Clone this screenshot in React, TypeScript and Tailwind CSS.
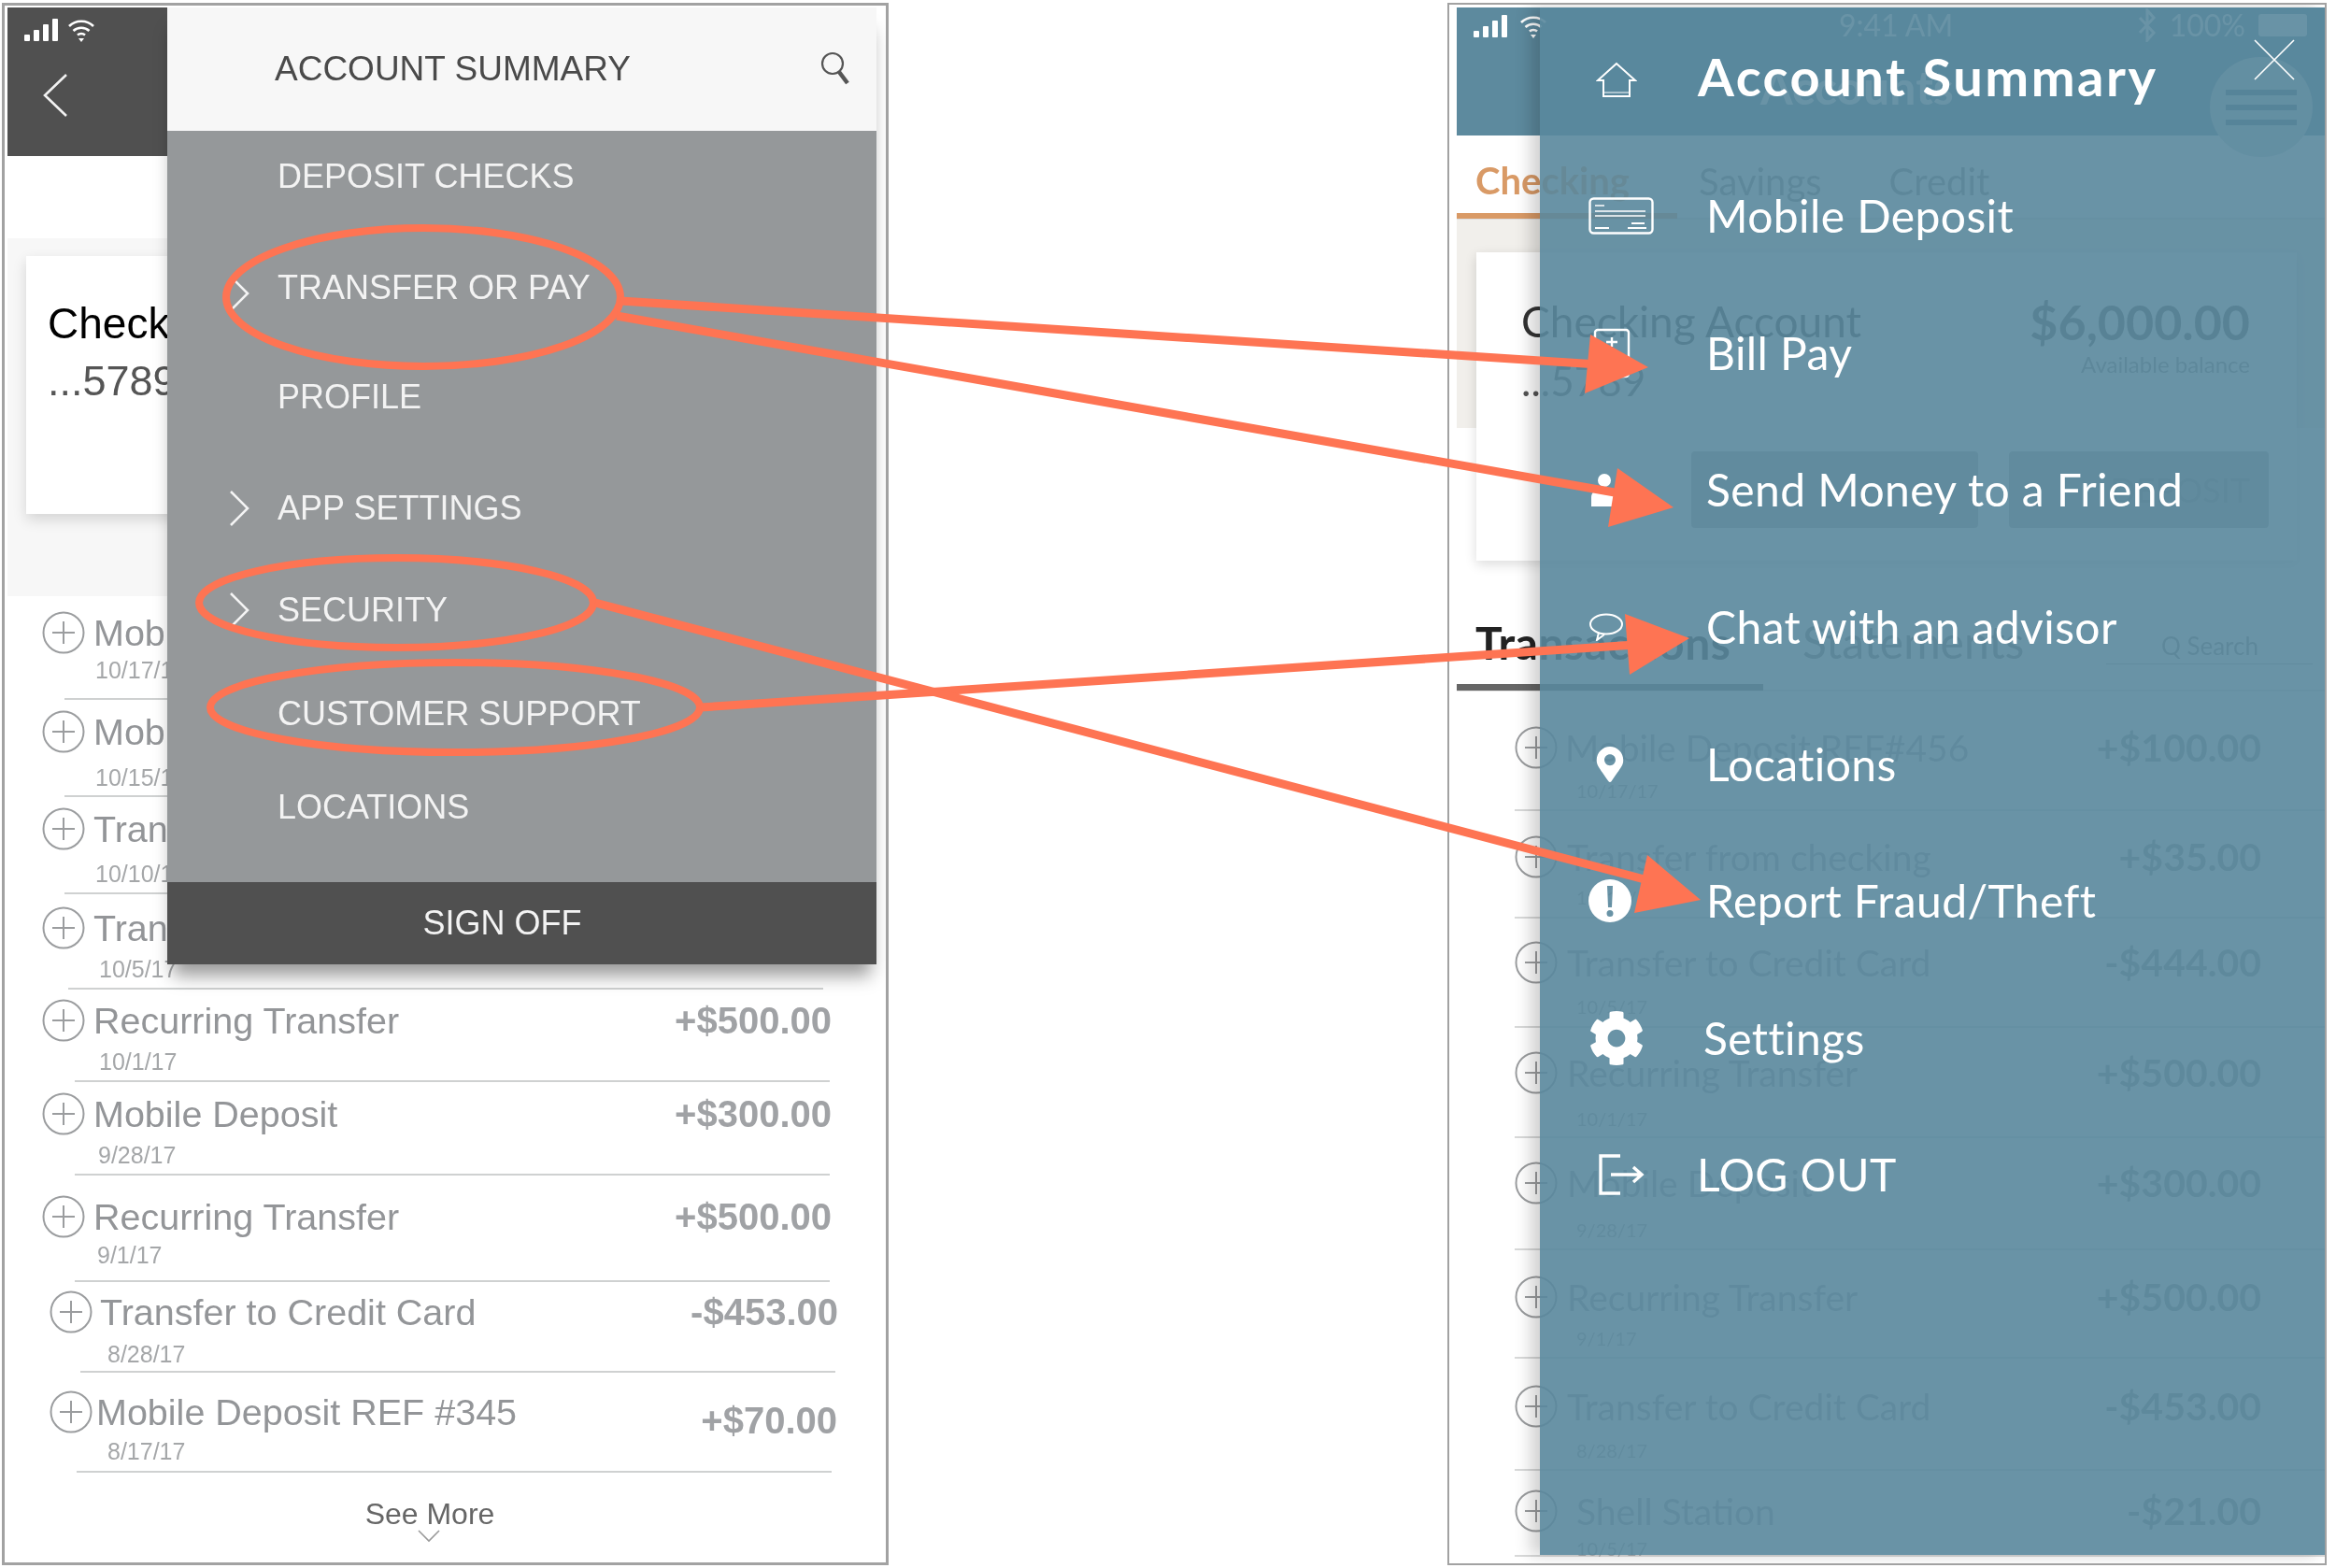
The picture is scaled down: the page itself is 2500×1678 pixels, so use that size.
import { FaCog, FaMapMarkerAlt } from "react-icons/fa";

type Row = {
  title: string;
  date: string;
  amount: string;
  box: string;
  titleCls: string;
  dateCls: string;
  amountCls?: string;
  line: string;
};

const leftRows: Row[] = [
  { title: "Mobile Deposit", date: "10/17/17", amount: "", box: "h-[109px] pt-[15px] pl-[37px] w-[881px]", titleCls: "ml-[9px]", dateCls: "mt-[1px] ml-[57px]", line: "ml-[61px] w-[820px]" },
  { title: "Mobile Deposit", date: "10/15/17", amount: "", box: "h-[102px] pt-[10px] pl-[37px] w-[881px]", titleCls: "ml-[9px]", dateCls: "mt-[10px] ml-[57px]", line: "ml-[61px] w-[820px]" },
  { title: "Transfer", date: "10/10/17", amount: "", box: "h-[102px] pt-[10px] pl-[37px] w-[881px]", titleCls: "ml-[9px]", dateCls: "mt-[9px] ml-[57px]", line: "ml-[61px] w-[820px]" },
  { title: "Transfer", date: "10/5/17", amount: "", box: "h-[100px] pt-[12px] pl-[37px] w-[881px]", titleCls: "ml-[9px]", dateCls: "mt-[5px] ml-[61px]", line: "ml-[65px] w-[808px]" },
  { title: "Recurring Transfer", date: "10/1/17", amount: "+$500.00", box: "h-[97px] pt-[9px] pl-[37px] w-[882px]", titleCls: "ml-[9px]", dateCls: "mt-[5px] ml-[61px]", line: "ml-[72px] w-[808px]" },
  { title: "Mobile Deposit", date: "9/28/17", amount: "+$300.00", box: "h-[98px] pt-[10px] pl-[37px] w-[882px]", titleCls: "ml-[9px]", dateCls: "mt-[5px] ml-[60px]", line: "ml-[72px] w-[808px]" },
  { title: "Recurring Transfer", date: "9/1/17", amount: "+$500.00", box: "h-[112px] pt-[20px] pl-[37px] w-[882px]", titleCls: "ml-[9px]", dateCls: "mt-[2px] ml-[59px]", line: "ml-[72px] w-[808px]" },
  { title: "Transfer to Credit Card", date: "8/28/17", amount: "-$453.00", box: "h-[95px] pt-[8px] pl-[45px] w-[889px]", titleCls: "ml-[8px]", dateCls: "mt-[6px] ml-[62px]", line: "ml-[78px] w-[808px]" },
  { title: "Mobile Deposit REF #345", date: "8/17/17", amount: "+$70.00", box: "h-[105px] pt-[18px] pl-[45px] w-[888px]", titleCls: "ml-[4px]", dateCls: "mt-[3px] ml-[62px]", amountCls: "translate-y-[9px]", line: "ml-[74px] w-[808px]" },
];

const rightRows: Row[] = [
  { title: "Mobile Deposit REF#456", date: "10/17/17", amount: "+$100.00", box: "h-[126px] pt-[36px]", titleCls: "ml-[8px]", dateCls: "mt-[7px]", line: "" },
  { title: "Transfer from checking", date: "10/15/17", amount: "+$35.00", box: "h-[113px] pt-[25px]", titleCls: "ml-[10px]", dateCls: "mt-[4px]", line: "" },
  { title: "Transfer to Credit Card", date: "10/5/17", amount: "-$444.00", box: "h-[115px] pt-[23px]", titleCls: "ml-[10px]", dateCls: "mt-[8px]", line: "" },
  { title: "Recurring Transfer", date: "10/1/17", amount: "+$500.00", box: "h-[116px] pt-[24px]", titleCls: "ml-[10px]", dateCls: "mt-[10px]", line: "" },
  { title: "Mobile Deposit", date: "9/28/17", amount: "+$300.00", box: "h-[118px] pt-[24px]", titleCls: "ml-[10px]", dateCls: "mt-[11px]", line: "" },
  { title: "Recurring Transfer", date: "9/1/17", amount: "+$500.00", box: "h-[114px] pt-[26px]", titleCls: "ml-[10px]", dateCls: "mt-[5px]", line: "" },
  { title: "Transfer to Credit Card", date: "8/28/17", amount: "-$453.00", box: "h-[118px] pt-[27px]", titleCls: "ml-[10px]", dateCls: "mt-[8px]", line: "" },
  { title: "Shell Station", date: "10/5/17", amount: "-$21.00", box: "h-[90px] pt-[19px]", titleCls: "ml-[20px]", dateCls: "mt-[1px]", line: "" },
];

const grayMenu = [
  { label: "DEPOSIT CHECKS", gap: "mt-[25px]", chevron: "" },
  { label: "TRANSFER OR PAY", gap: "mt-[71px]", chevron: "translate-y-[6px]" },
  { label: "PROFILE", gap: "mt-[69px]", chevron: "" },
  { label: "APP SETTINGS", gap: "mt-[71px]", chevron: "translate-y-0" },
  { label: "SECURITY", gap: "mt-[61px]", chevron: "translate-y-0" },
  { label: "CUSTOMER SUPPORT", gap: "mt-[63px]", chevron: "" },
  { label: "LOCATIONS", gap: "mt-[52px]", chevron: "" },
];

function PlusCircle({ className = "" }: { className?: string }) {
  return (
    <svg width="46" height="46" viewBox="0 0 46 46" fill="none" stroke="#9b9d9f" strokeWidth="2" className={"shrink-0 " + className}>
      <circle cx="23" cy="23" r="21.5" />
      <path d="M23 11v24M11 23h24" />
    </svg>
  );
}

function Signal() {
  return (
    <svg width="36" height="24" viewBox="0 0 36 24" fill="#fff">
      <rect x="0" y="17" width="6" height="7" rx="1" />
      <rect x="10" y="12" width="6" height="12" rx="1" />
      <rect x="20" y="6" width="6" height="18" rx="1" />
      <rect x="30" y="0" width="6" height="24" rx="1" />
    </svg>
  );
}

function Wifi() {
  return (
    <svg width="30" height="25" viewBox="0 0 30 25" fill="none" stroke="#fff" strokeWidth="2.6">
      <path d="M2 8c7-7 19-7 26 0" />
      <path d="M6.5 13c4.6-4.4 12.4-4.4 17 0" />
      <path d="M11 17.5c2.2-2 5.800-2 8 0" />
      <path d="M15 25l-3-4h6z" fill="#fff" stroke="none" />
    </svg>
  );
}

function Chevron({ className = "" }: { className?: string }) {
  return (
    <svg width="22" height="42" viewBox="0 0 22 42" fill="none" stroke="#f4f4f4" strokeWidth="2.6" className={className}>
      <path d="M2 3l18 18L2 39" />
    </svg>
  );
}

function LeftPhone() {
  return (
    <div className="relative h-[1672px] w-[949px] shrink-0 overflow-hidden border-[3px] border-[#a2a2a2] bg-white pl-[3px] pt-[2px] font-['Liberation_Sans',sans-serif]">
      <div className="h-[159px] w-[300px] bg-[#505050] pl-[18px] pt-[12px]">
        <div className="flex items-start gap-[10px]">
          <Signal />
          <Wifi />
        </div>
        <svg width="28" height="48" viewBox="0 0 28 48" fill="none" stroke="#f2f2f2" strokeWidth="2.6" className="ml-[19px] mt-[33px]">
          <path d="M26 2L3 24l23 22" />
        </svg>
      </div>
      <div className="mt-[88px] h-[383px] w-[930px] bg-[#f7f7f7] pl-[20px] pt-[19px]">
        <div className="h-[276px] w-[600px] bg-white pl-[23px] pt-[47px] shadow-[0_6px_14px_rgba(0,0,0,0.14)]">
          <div className="text-[46px] leading-[50px] text-black">Check</div>
          <div className="mt-[12px] text-[45px] leading-[50px] text-[#555]">...5789</div>
        </div>
      </div>
      {leftRows.map((r) => (
        <div key={r.date}>
          <div className={r.box}>
            <div className="flex h-[48px] items-center">
              <PlusCircle />
              <span className={"text-[39.5px] leading-[48px] text-[#939598] " + r.titleCls}>{r.title}</span>
              <span className={"ml-auto text-[40px] font-bold leading-[48px] text-[#a0a2a5] " + (r.amountCls ?? "")}>{r.amount}</span>
            </div>
            <div className={"text-[25px] leading-[30px] text-[#a5a7a9] " + r.dateCls}>{r.date}</div>
          </div>
          <div className={"h-[2px] bg-[#cfd1d1] " + r.line} />
        </div>
      ))}
      <div className="mt-[24px] w-[904px] text-center text-[32px] leading-[40px] text-[#666]">See More</div>
      <svg width="24" height="14" viewBox="0 0 24 14" fill="none" stroke="#9a9a9a" strokeWidth="1.6" className="ml-[439px] mt-[-3px]">
        <path d="M1 1l11 11L23 1" />
      </svg>

      {/* menu over the page */}
      <div className="absolute left-[174px] top-[2px] flex h-[1024px] w-[759px] flex-col shadow-[0_18px_18px_-6px_rgba(0,0,0,0.4)]">
        <div className="flex h-[132px] shrink-0 items-center bg-[#f7f7f7] pl-[115px] pr-[28px]">
          <span className="text-[37px] leading-[48px] text-[#4a4a4a]">ACCOUNT SUMMARY</span>
          <svg width="32" height="36" viewBox="0 0 32 36" fill="none" stroke="#555" className="ml-auto mt-[-2px]">
            <circle cx="13" cy="13" r="11" strokeWidth="2.2" />
            <path d="M20 22l9 12" strokeWidth="4.5" />
          </svg>
        </div>
        <div className="flex-1 bg-[#95989a]">
          {grayMenu.map((m) => (
            <div key={m.label} className={"flex h-[48px] items-center " + m.gap}>
              <div className="w-[118px] shrink-0 pl-[66px]">
                {m.chevron && <Chevron className={m.chevron} />}
              </div>
              <span className="text-[36px] leading-[48px] text-[#f3f3f3]">{m.label}</span>
            </div>
          ))}
        </div>
        <div className="flex h-[88px] shrink-0 items-center justify-center bg-[#505050] pr-[42px] text-[36px] text-[#f3f3f3]">SIGN OFF</div>
      </div>
    </div>
  );
}

function PageBehind() {
  return (
    <div className="w-full font-['Lato',sans-serif]">
      {/* status + title bar */}
      <div className="relative flex h-[137px] items-start bg-[#5d8a9e] pl-[18px] pr-[19px] pt-[8px]">
        <div className="flex items-start gap-[13px]">
          <Signal />
          <Wifi />
        </div>
        <span className="ml-[312px] mt-[-9px] text-[32px] leading-[40px] text-white">9:41 AM</span>
        <div className="ml-auto mt-[-9px] flex items-center gap-[14px] text-[32px] leading-[40px] text-white">
          <svg width="20" height="36" viewBox="0 0 20 36" fill="none" stroke="#fff" strokeWidth="3">
            <path d="M2 10l15 16-7 8V2l7 8L2 26" />
          </svg>
          <span>100%</span>
          <div className="h-[24px] w-[52px] rounded-[3px] bg-white" />
        </div>
        <span className="absolute left-[325px] top-[55px] text-[50px] font-bold leading-[60px] text-white">Accounts</span>
        <div className="absolute left-[806px] top-[53px] flex h-[107px] w-[110px] flex-col items-center justify-center gap-[10px] rounded-full bg-[#c4cfd4]">
          <div className="h-[6px] w-[76px] bg-[#44667a]" />
          <div className="h-[6px] w-[76px] bg-[#44667a]" />
          <div className="h-[6px] w-[76px] bg-[#44667a]" />
        </div>
      </div>
      {/* account tabs */}
      <div className="flex h-[90px] items-center border-b-2 border-[#ddd]">
        <div className="flex h-[90px] w-[236px] shrink-0 items-center border-b-[6px] border-[#d99a66] pl-[20px] pt-[14px] text-[40px] font-bold text-[#d99a66]">Checking</div>
        <span className="ml-[23px] pt-[10px] text-[40px] text-[#888]">Savings</span>
        <span className="ml-[72px] pt-[10px] text-[40px] text-[#888]">Credit</span>
      </div>
      {/* account card */}
      <div className="h-[223px] bg-[#f1efeb] pl-[21px] pr-[30px] pt-[35px]">
        <div className="h-[330px] bg-white pl-[48px] pr-[50px] pt-[44px] shadow-[0_4px_12px_rgba(0,0,0,0.14)]">
          <div className="flex items-start justify-between">
            <span className="text-[46px] leading-[60px] text-[#333]">Checking Account</span>
            <div className="flex flex-col items-end">
              <span className="text-[52px] font-bold leading-[60px] text-[#555]">$6,000.00</span>
              <span className="mt-[2px] text-[24px] leading-[28px] text-[#888]">Available balance</span>
            </div>
          </div>
          <div className="mt-[-22px] text-[44px] leading-[50px] text-[#555]">...5789</div>
          <div className="ml-[182px] mt-[51px] flex gap-[33px]">
            <div className="h-[82px] w-[307px] shrink-0 rounded-[4px] bg-[#b0b0b0]" />
            <div className="flex h-[82px] w-[278px] shrink-0 items-center justify-end rounded-[4px] bg-[#b0b0b0] pr-[20px] text-[36px] text-[#8a8a8a]">DEPOSIT</div>
          </div>
        </div>
      </div>
      {/* transactions tabs */}
      <div className="mt-[182px] flex h-[100px] items-center border-b-2 border-[#e2e2e2]">
        <div className="flex h-[100px] w-[328px] shrink-0 items-center border-b-[7px] border-[#666] pl-[20px] pt-[4px] text-[48px] font-bold tracking-[0.5px] text-[#222]">Transactions</div>
        <span className="ml-[42px] mt-[-4px] shrink-0 text-[48px] text-[#777]">Statements</span>
        <div className="ml-[88px] mt-[5px] flex h-[38px] w-[221px] shrink-0 items-center justify-center border-b border-[#bbb] text-[26px] text-[#888]">Q Search</div>
      </div>
      {rightRows.map((r) => (
        <div key={r.title + r.date}>
          <div className={"w-[861px] pl-[62px] " + r.box}>
            <div className="flex h-[48px] items-center">
              <PlusCircle />
              <span className={"text-[39px] leading-[48px] text-[#a3a5a8] " + r.titleCls}>{r.title}</span>
              <span className="ml-auto text-[41px] font-bold leading-[48px] text-[#939598]">{r.amount}</span>
            </div>
            <div className={"ml-[66px] text-[20px] leading-[30px] text-[#a8aaad] " + r.dateCls}>{r.date}</div>
          </div>
          <div className="ml-[62px] h-[2px] bg-[#d8d9d9]" />
        </div>
      ))}
    </div>
  );
}

function MenuItem({ icon, label, labelCls = "" }: { icon: React.ReactNode; label: string; labelCls?: string }) {
  return (
    <div className="flex h-[146.6px] items-center">
      <div className="flex w-[178px] shrink-0 items-center pl-[52px]">{icon}</div>
      <span className={"text-[48px] tracking-[0.4px] text-white " + labelCls}>{label}</span>
    </div>
  );
}

function RightPhone() {
  return (
    <div className="relative h-[1672px] w-[941px] shrink-0 overflow-hidden border-2 border-[#a2a2a2] bg-white pl-[8px] pt-[3px]">
      <PageBehind />
      {/* teal slide-out menu */}
      <div className="absolute left-[97px] top-[3px] h-[1656px] w-[841px] bg-[#59879c]/90 font-['Lato',sans-serif] shadow-[-10px_0_16px_rgba(0,0,0,0.18)]">
        <div className="relative flex h-[150px] items-center pb-[2px]">
          <div className="flex w-[169px] shrink-0 pl-[60px] pt-[8px]">
            <svg width="44" height="40" viewBox="0 0 44 40" fill="none" stroke="#fff" strokeWidth="2">
              <path d="M22 2L2 20h6v17h28V20h6z" />
              <path d="M8 33h28" strokeWidth="1" />
            </svg>
          </div>
          <span className="text-[56px] font-bold leading-[64px] tracking-[2.5px] text-white">Account Summary</span>
          <svg width="44" height="44" viewBox="0 0 44 44" stroke="#fff" strokeWidth="1.6" className="absolute left-[764px] top-[34px]">
            <path d="M1 1l42 42M43 1L1 43" />
          </svg>
        </div>
        <MenuItem
          label="Mobile Deposit"
          icon={
            <svg width="70" height="40" viewBox="0 0 70 40" fill="none" stroke="#fff">
              <rect x="1.500" y="1.500" width="67" height="37" rx="4" strokeWidth="2.4" />
              <path d="M7 9h10M7 15h54M7 20h54" strokeWidth="1.4" />
              <path d="M7 33h15M42 33h20M46 28h14" strokeWidth="1.800" />
            </svg>
          }
        />
        <MenuItem
          label="Bill Pay"
          icon={
            <svg width="40" height="54" viewBox="0 0 40 54" fill="none" stroke="#fff" strokeWidth="2.4" className="ml-[5px]">
              <rect x="2" y="2" width="36" height="50" rx="3" />
              <path d="M20 10v10M14 15h12" />
            </svg>
          }
        />
        <MenuItem
          label="Send Money to a Friend"
          icon={
            <svg width="26" height="36" viewBox="0 0 26 36" fill="#fff" className="ml-[3px]">
              <circle cx="14" cy="8" r="7" />
              <path d="M0 36V26c0-6 6-9 14-9s12 3 12 9v10z" />
            </svg>
          }
        />
        <MenuItem
          label="Chat with an advisor"
          icon={
            <svg width="38" height="30" viewBox="0 0 38 30" fill="none" stroke="#fff" strokeWidth="2">
              <ellipse cx="19" cy="12" rx="17" ry="10.500" />
              <path d="M11 21l-2 8 8-6" />
            </svg>
          }
        />
        <MenuItem label="Locations" icon={<FaMapMarkerAlt className="ml-[4px] text-[38px] text-white" />} />
        <MenuItem
          label="Report Fraud/Theft"
          icon={
            <svg width="46" height="46" viewBox="0 0 46 46" fill="#fff">
              <path
                fillRule="evenodd"
                d="M23 0a23 23 0 1 0 0 46a23 23 0 0 0 0-46zM20 7h6l-1 23h-4zM23 33a3.500 3.500 0 1 1 0 7a3.500 3.500 0 0 1 0-7z"
              />
            </svg>
          }
        />
        <MenuItem label="Settings" labelCls="ml-[-3px]" icon={<FaCog className="text-[60px] text-white" />} />
        <MenuItem
          label="LOG OUT"
          labelCls="ml-[-10px]"
          icon={
            <svg width="50" height="44" viewBox="0 0 50 44" fill="none" stroke="#fff" strokeWidth="3.4" className="ml-[10px]">
              <path d="M24 2H3v40h21" />
              <path d="M14 22h32M38 14l9 8-9 8" />
            </svg>
          }
        />
      </div>
    </div>
  );
}

function Annotations() {
  const orange = "#fe7453";
  return (
    <svg width="2500" height="1678" viewBox="0 0 2500 1678" fill="none" className="pointer-events-none absolute left-0 top-0">
      <g stroke={orange} strokeWidth="8">
        <ellipse cx="453" cy="318" rx="211" ry="74" />
        <ellipse cx="424" cy="645" rx="211" ry="48" />
        <ellipse cx="487" cy="757" rx="262" ry="48" />
      </g>
      <g stroke={orange} strokeWidth="9">
        <path d="M664 322L1710 390" />
        <path d="M660 338L1745 530" />
        <path d="M750 757L1750 690" />
        <path d="M637 645L1775 945" />
      </g>
      <g fill={orange}>
        <path d="M1764 393L1702 358L1696 421z" />
        <path d="M1791 543L1731 501L1721 564z" />
        <path d="M1808 683L1739 657L1744 722z" />
        <path d="M1820 963L1763 915L1749 977z" />
      </g>
    </svg>
  );
}

export default function App() {
  return (
    <div className="relative flex h-[1678px] w-[2500px] items-start bg-white pl-[2px] pt-[3px] blur-[0.6px]">
      <LeftPhone />
      <div className="w-[598px] shrink-0" />
      <RightPhone />
      <Annotations />
    </div>
  );
}
